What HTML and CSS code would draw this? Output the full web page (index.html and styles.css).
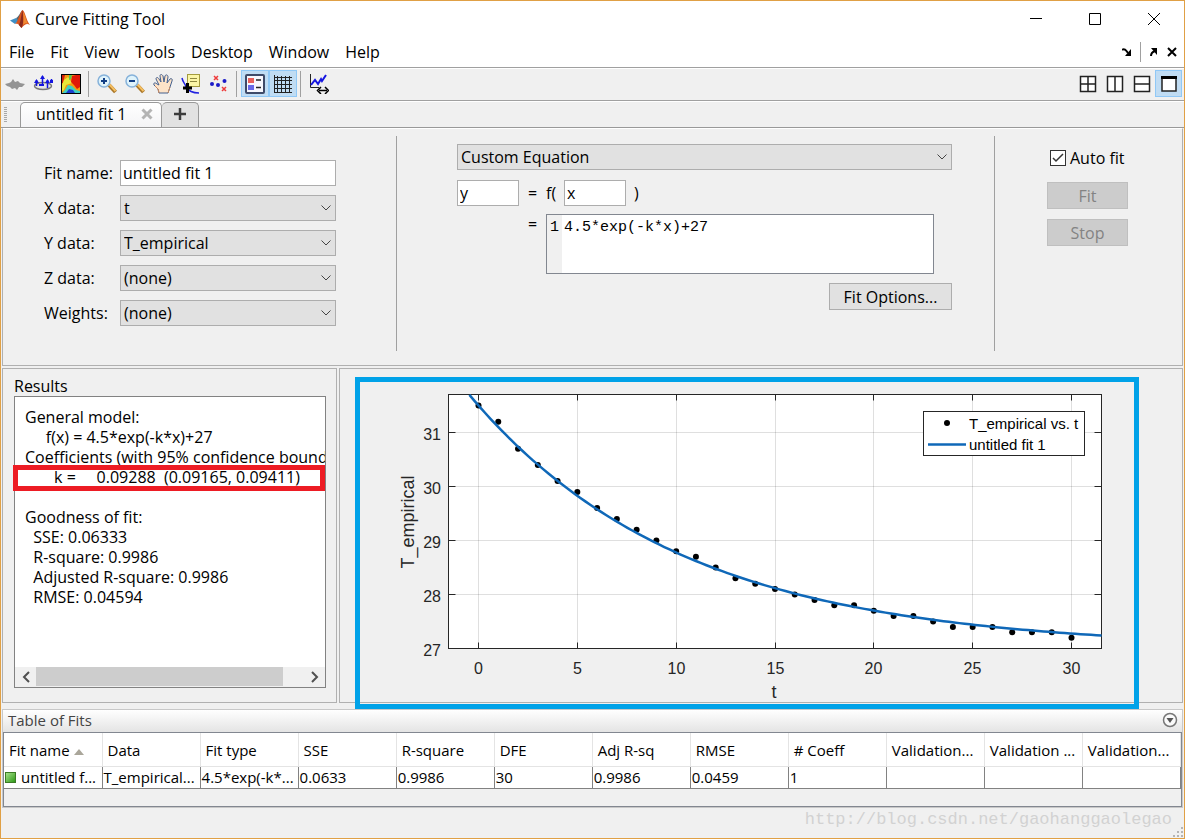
FILE: index.html
```html
<!DOCTYPE html>
<html lang="en">
<head>
  <meta charset="UTF-8">
  <meta name="viewport" content="width=device-width, initial-scale=1.0">
  <title>Curve Fitting Tool</title>
  <link rel="stylesheet" href="styles.css">
</head>
<body>

  <header class="titlebar">
    <svg class="logo" width="20" height="20" viewBox="0 0 20 20">
      <path d="M0 11.500 L6 9 L9 12 L5 15 Z" fill="#3f8fc4"/>
      <path d="M6 9 C9 8 10 3 12.500 1 L11 9 L9 13 Z" fill="#55656f"/>
      <path d="M5 15 C8 13 10 3 12.500 1 C15 2 16 11 20 16 C17 14 15 15 11.500 19 C9 17 9 14 5 15 Z" fill="#d9541e"/>
      <path d="M12.500 1 C11 6 11 12 9 16 L11.500 19 C14 15 13 6 12.500 1 Z" fill="#8c2a1c"/>
      <path d="M13 3 C13.500 8 14 11 13 16 C15 14 16 14 18 15 C16 11 15 5 13 3 Z" fill="#f08b32"/>
    </svg>
    <span class="title">Curve Fitting Tool</span>
    <div class="window-buttons">
      <button aria-label="Minimize"><svg width="14" height="14"><path d="M1 6.500 H13" stroke="#000"/></svg></button>
      <button aria-label="Maximize"><svg width="14" height="14"><path d="M1.500 1.500 H12.500 V12.500 H1.500 Z" fill="none" stroke="#000"/></svg></button>
      <button aria-label="Close"><svg width="14" height="14"><path d="M1 1 L13 13 M13 1 L1 13" stroke="#000"/></svg></button>
    </div>
  </header>

  <nav class="menubar">
    <button>File</button>
    <button>Fit</button>
    <button>View</button>
    <button>Tools</button>
    <button>Desktop</button>
    <button>Window</button>
    <button>Help</button>
    <div class="dock-buttons">
      <button aria-label="Minimize figure"><svg width="10" height="10"><path d="M0 3 C2 1 4 3 6 6" fill="none" stroke="#000" stroke-width="2"/><path d="M9 2 V9 H3 Z"/></svg></button>
      <span class="dock-sep"></span>
      <button aria-label="Undock figure"><svg width="10" height="10"><path d="M2 9 C2 6 3 5 6 4" fill="none" stroke="#000" stroke-width="2"/><path d="M2 1 H8 V8 Z"/></svg></button>
      <button aria-label="Close figure"><svg width="10" height="10"><path d="M1 1 L9 9 M9 1 L1 9" stroke="#000" stroke-width="2"/></svg></button>
    </div>
  </nav>

  <div class="toolbar">
    <button aria-label="Residuals plot">
      <svg width="20" height="20"><path d="M0 10 L4 9 L6 8 L8 5 L10 8 L13 7 L15 9 L20 10 L17 13 L14 13 L12 16 L10 14 L7 15 L5 13 L2 12 Z" fill="#949494"/></svg>
    </button>
    <button aria-label="Surface plot">
      <svg width="20" height="20"><ellipse cx="10" cy="12" rx="8.500" ry="3.500" fill="#e6e6e6" stroke="#777" stroke-width="1.500"/><path d="M9.500 12 V2 M3.500 12 V6 M14.500 14 V6 M18.500 9 V5" stroke="#1414e0" stroke-width="1.500"/><path d="M7 5 L9.500 1 L12 5 Z M1 9 L3.500 5 L6 9 Z M12 9 L14.500 5 L17 9 Z M17 6 h3 v3 h-3 Z M6 10 h5 v2 h-5 Z" fill="#1414e0"/></svg>
    </button>
    <button aria-label="Contour plot">
      <svg width="20" height="20">
        <rect width="20" height="20" fill="#000"/>
        <rect x="1" y="1" width="18" height="18" fill="#f39a10"/>
        <path d="M1 1 H4 L2 9 L1 9 Z" fill="#d51c08"/>
        <path d="M3 6 L7 3 L11 9 L5 11 L3 16 L1 17 V11 Z" fill="#e8e83a"/>
        <path d="M11 2 L15 1 H19 V13 L16 15 L13 11 L10 8 Z" fill="#e01808"/>
        <path d="M8 1 H11 L10 5 L8 6 Z" fill="#58c850"/>
        <path d="M4 16 L7 11 L11 12 L15 16 L19 17 V19 H1 Z" fill="#3fd0c0"/>
        <path d="M5 19 L8 15 L12 16 L14 19 Z" fill="#1b3fd0"/>
      </svg>
    </button>
    <span class="sep"></span>
    <button aria-label="Zoom in">
      <svg width="20" height="20"><path d="M12 11 L18.500 18" stroke="#a87526" stroke-width="4"/><path d="M12 10 L18.500 17" stroke="#f5bf62" stroke-width="2"/><circle cx="7" cy="7" r="6" fill="#dff3fb" stroke="#86b2da" stroke-width="1.500"/><path d="M7 4 V10 M4 7 H10" stroke="#123f86" stroke-width="2"/></svg>
    </button>
    <button aria-label="Zoom out">
      <svg width="20" height="20"><path d="M12 11 L18.500 18" stroke="#a87526" stroke-width="4"/><path d="M12 10 L18.500 17" stroke="#f5bf62" stroke-width="2"/><circle cx="7" cy="7" r="6" fill="#dff3fb" stroke="#86b2da" stroke-width="1.500"/><path d="M4 7 H10" stroke="#123f86" stroke-width="2"/></svg>
    </button>
    <button aria-label="Pan">
      <svg width="20" height="20"><path d="M6 19 L5 15 L1 11 C0 9 2 8 4 10 L6 11 L3 5 C3 3 5 3 6 5 L8 8 L7 2 C7 0 9 0 10 2 L11 8 L12 2 C13 0 15 1 15 3 L14 9 L17 5 C18 4 20 5 19 7 L17 13 L15 19 Z" fill="#fde3c8" stroke="#44608e"/><path d="M6 19 L5 15 L2 12 M15 19 L17 13" stroke="#c98b62" fill="none"/></svg>
    </button>
    <button aria-label="Data cursor">
      <svg width="20" height="20"><path d="M1 4 C2 9 4 9 5 13 C8 18 12 19 18 19" fill="none" stroke="#2222e0" stroke-width="1.500"/><rect x="6.500" y="0.500" width="12" height="12" fill="#fbf6a6" stroke="#a39b3e"/><path d="M9 4.500 H16 M9 7.500 H16" stroke="#8e8840"/><path d="M6.500 9 V19 M2 14 H11" stroke="#000" stroke-width="3"/></svg>
    </button>
    <button aria-label="Exclude outliers">
      <svg width="20" height="20"><g fill="#1a1ac8"><circle cx="3" cy="10" r="2"/><circle cx="9" cy="11" r="2"/><circle cx="15.500" cy="7" r="2"/></g><path d="M5 2 L9 6 M9 2 L5 6 M13 13 L17 17 M17 13 L13 17" stroke="#ee3a3a" stroke-width="1.500"/></svg>
    </button>
    <span class="sep"></span>
    <button class="on" aria-label="Legend">
      <svg width="20" height="20"><rect x="1" y="1" width="18" height="18" rx="1" fill="#f7f7fd" stroke="#3e4a68" stroke-width="2"/><rect x="3" y="4" width="6" height="5" fill="#e8605c"/><rect x="3" y="11" width="6" height="5" fill="#6868e8"/><path d="M11 6 H16 M11 13.500 H16" stroke="#222" stroke-width="1.500"/></svg>
    </button>
    <button class="on" aria-label="Grid">
      <svg width="20" height="20"><path d="M1.500 1 V19 M4.500 2 V19 M8.500 2 V19 M12.500 2 V19 M16.500 2 V19 M1 18.500 H19 M1 14.500 H19 M1 10.500 H19 M1 6.500 H19 M1 3.500 H19" stroke="#222"/></svg>
    </button>
    <span class="sep"></span>
    <button aria-label="Axes limits">
      <svg width="20" height="20"><path d="M1.500 0 V13.500 H10" fill="none" stroke="#222"/><path d="M2 11 L6 6 L9 10 L12 5 L13 7 L17 1" fill="none" stroke="#1414e0" stroke-width="2"/><path d="M10 16.500 H18" stroke="#000" stroke-width="1.500"/><path d="M12 13 L8.500 16.500 L12 20 M16 13 L19.500 16.500 L16 20" fill="none" stroke="#000" stroke-width="1.500"/></svg>
    </button>
    <div class="layout-buttons">
      <button aria-label="Tile all"><svg width="18" height="18"><path d="M1.500 1.500 H16.500 V16.500 H1.500 Z M9 1 V17 M1 9 H17" fill="#fff" stroke="#222" stroke-width="1.500"/></svg></button>
      <button aria-label="Left/right tile"><svg width="18" height="18"><path d="M1.500 1.500 H16.500 V16.500 H1.500 Z M9 1 V17" fill="#fff" stroke="#222" stroke-width="1.500"/></svg></button>
      <button aria-label="Top/bottom tile"><svg width="18" height="18"><path d="M1.500 1.500 H16.500 V16.500 H1.500 Z M1 9 H17" fill="#fff" stroke="#222" stroke-width="1.500"/></svg></button>
      <button class="on" aria-label="Maximize"><svg width="18" height="18"><path d="M2 2 H16 V16 H2 Z" fill="#fff" stroke="#222" stroke-width="1.500"/><path d="M1 2.500 H17" stroke="#000" stroke-width="3"/></svg></button>
    </div>
  </div>

  <div class="tabs">
    <span class="grip"></span>
    <div class="tab">
      <span>untitled fit 1</span>
      <button aria-label="Close tab"><svg width="12" height="12"><path d="M1.500 1.500 L10.500 10.500 M10.500 1.500 L1.500 10.500" stroke="#b4b4b4" stroke-width="3"/></svg></button>
    </div>
    <button class="tab-add" aria-label="New fit"><svg width="14" height="14"><path d="M7 1 V13 M1 7 H13" stroke="#3c3c3c" stroke-width="2.500"/></svg></button>
  </div>

  <main>
    <form class="fit-panel">
      <div class="data-fields">
        <label for="fit-name">Fit name:</label>
        <input type="text" id="fit-name" value="untitled fit 1">
        <label for="x-data">X data:</label>
        <select id="x-data"><option>t</option></select>
        <label for="y-data">Y data:</label>
        <select id="y-data"><option>T_empirical</option></select>
        <label for="z-data">Z data:</label>
        <select id="z-data"><option>(none)</option></select>
        <label for="weights">Weights:</label>
        <select id="weights"><option>(none)</option></select>
      </div>

      <div class="equation">
        <select aria-label="Fit type"><option>Custom Equation</option></select>
        <div class="variables">
          <input type="text" aria-label="Dependent variable" value="y">
          <span class="eq">=</span>
          <span class="fn">f(</span>
          <input type="text" aria-label="Independent variable" value="x">
          <span class="close">)</span>
        </div>
        <div class="expression">
          <span class="eq">=</span>
          <div class="editor">
            <span class="line-no">1</span>
            <textarea aria-label="Equation" spellcheck="false">4.5*exp(-k*x)+27</textarea>
          </div>
        </div>
        <button type="button" class="btn options">Fit Options...</button>
      </div>

      <div class="run">
        <label class="auto"><input type="checkbox" checked>Auto fit</label>
        <button type="button" class="btn" disabled>Fit</button>
        <button type="button" class="btn" disabled>Stop</button>
      </div>
    </form>

    <div class="output">
      <section class="results">
        <h2>Results</h2>
        <div class="results-box">
          <pre class="results-text">General model:
     f(x) = 4.5*exp(-k*x)+27
Coefficients (with 95% confidence bounds):
       k =     0.09288  (0.09165, 0.09411)

Goodness of fit:
  SSE: 0.06333
  R-square: 0.9986
  Adjusted R-square: 0.9986
  RMSE: 0.04594</pre>
          <div class="mark"></div>
          <div class="scrollbar">
            <button aria-label="Scroll left"><svg width="8" height="12"><path d="M7 1 L2 6 L7 11" fill="none" stroke="#505050" stroke-width="2"/></svg></button>
            <div class="track"><div class="thumb"></div></div>
            <button aria-label="Scroll right"><svg width="8" height="12"><path d="M1 1 L6 6 L1 11" fill="none" stroke="#505050" stroke-width="2"/></svg></button>
          </div>
        </div>
      </section>

      <section class="plot">
        <div class="figure">
          <svg id="chart" viewBox="0 0 774 322">
            <rect x="88.500" y="12.500" width="653" height="254" fill="#fff"/>
            <g id="grid"></g>
            <rect x="88.500" y="12.500" width="653" height="254" fill="none" stroke="#262626"/>
            <g id="labels" class="tick-label"></g>
            <g id="points"></g>
            <path id="curve" class="curve"/>
            <text class="axis-label" x="414" y="316" text-anchor="middle">t</text>
            <text class="axis-label" transform="translate(54 140) rotate(-90)" text-anchor="middle">T_empirical</text>
            <rect x="563.500" y="29.500" width="161" height="44" fill="#fff" stroke="#262626"/>
            <circle cx="587" cy="41" r="3"/>
            <path class="curve" d="M568 62.500 H606"/>
            <text class="legend-label" x="609" y="47">T_empirical vs. t</text>
            <text class="legend-label" x="609" y="68">untitled fit 1</text>
          </svg>
        </div>
      </section>
    </div>

    <section class="fits">
      <div class="fits-head">
        <h2>Table of Fits</h2>
        <button aria-label="Table actions"><svg width="16" height="16"><circle cx="8" cy="8" r="6.500" fill="#fafafa" stroke="#777" stroke-width="1.500"/><path d="M4.500 6 H11.500 L8 11 Z" fill="#555"/></svg></button>
      </div>
      <div class="fits-body">
        <table>
          <thead>
            <tr>
              <th>Fit name <svg width="10" height="6"><path d="M0 6 L5 0 L10 6 Z" fill="#aaa69a"/></svg></th>
              <th>Data</th>
              <th>Fit type</th>
              <th>SSE</th>
              <th>R-square</th>
              <th>DFE</th>
              <th>Adj R-sq</th>
              <th>RMSE</th>
              <th># Coeff</th>
              <th>Validation...</th>
              <th>Validation ...</th>
              <th>Validation...</th>
            </tr>
          </thead>
          <tbody>
            <tr>
              <td><span class="swatch"></span>untitled f...</td>
              <td>T_empirical...</td>
              <td>4.5*exp(-k*...</td>
              <td>0.0633</td>
              <td>0.9986</td>
              <td>30</td>
              <td>0.9986</td>
              <td>0.0459</td>
              <td>1</td>
              <td></td>
              <td></td>
              <td></td>
            </tr>
          </tbody>
        </table>
      </div>
    </section>
  </main>

  <footer>
    <span>http://blog.csdn.net/gaohanggaolegao</span>
    <svg width="12" height="12"><path d="M9 1 h2 v2 h-2 Z M5 5 h2 v2 h-2 Z M9 5 h2 v2 h-2 Z M1 9 h2 v2 h-2 Z M5 9 h2 v2 h-2 Z M9 9 h2 v2 h-2 Z" fill="#b4b4b4"/></svg>
  </footer>

  <script>
    const temps = [
      31.5, 31.2, 30.7, 30.4, 30.1, 29.9, 29.6, 29.4, 29.2, 29.0, 28.8,
      28.7, 28.5, 28.3, 28.2, 28.1, 28.0, 27.9, 27.8, 27.8, 27.7,
      27.6, 27.6, 27.5, 27.4, 27.4, 27.4, 27.3, 27.3, 27.3, 27.2
    ];
    const k = 0.09288;
    const left = 88.5, right = 741.5, top_ = 12.5, bottom = 266.5;
    const px = t => 118.5 + t * 593 / 30;
    const py = T => bottom - (T - 27) * 54;

    let grid = "", labels = "";
    for (let t = 0; t <= 30; t += 5) {
      const x = Math.floor(px(t)) + 0.5;
      grid += `<path class="grid" d="M${x} ${top_} V${bottom}"/>`;
      grid += `<path class="tick" d="M${x} ${top_} v6 M${x} ${bottom} v-6"/>`;
      labels += `<text x="${x}" y="292" text-anchor="middle">${t}</text>`;
    }
    for (let T = 27; T <= 31; T++) {
      const y = py(T);
      if (T > 27) {
        grid += `<path class="grid" d="M${left} ${y} H${right}"/>`;
        grid += `<path class="tick" d="M${left} ${y} h7 M${right} ${y} h-7"/>`;
      }
      labels += `<text x="81" y="${y + 7}" text-anchor="end">${T}</text>`;
    }
    document.getElementById("grid").innerHTML = grid;
    document.getElementById("labels").innerHTML = labels;

    document.getElementById("points").innerHTML = temps
      .map((T, t) => `<circle cx="${px(t)}" cy="${py(T)}" r="3"/>`)
      .join("");

    // fitted curve: 4.5*exp(-k*x)+27
    const path = [];
    const start = -0.46, end = 31.52, steps = 120;
    for (let i = 0; i <= steps; i++) {
      const t = start + (end - start) * i / steps;
      path.push(`${px(t).toFixed(2)} ${py(4.5 * Math.exp(-k * t) + 27).toFixed(2)}`);
    }
    document.getElementById("curve").setAttribute("d", "M" + path.join(" L"));
  </script>

</body>
</html>
```
FILE: styles.css
```css
* {
  box-sizing: border-box;
}
body {
  margin: 0;
  min-height: 100vh;
  display: flex;
  flex-direction: column;
  border: 1px solid #e0a045;
  background: #f0f0f0;
  color: #000;
  font-family: "Open Sans", "Noto Sans", sans-serif;
  font-size: 16px;
  line-height: 20px;
}
button, input, select, textarea {
  font: inherit;
  color: inherit;
  margin: 0;
}
button {
  border: 0;
  padding: 0;
  background: none;
}
svg {
  display: block;
}
h2 {
  margin: 0;
  font-size: 16px;
  font-weight: normal;
}

/* title and menus */
.titlebar {
  display: flex;
  align-items: center;
  height: 36px;
  padding-left: 9px;
  background: #fff;
}
.title {
  margin-left: 5px;
}
.window-buttons {
  display: flex;
  margin-left: auto;
  padding-right: 1px;
}
.window-buttons button {
  display: flex;
  justify-content: center;
  width: 59px;
}
.menubar {
  display: flex;
  align-items: center;
  gap: 16px;
  height: 31px;
  padding: 0 7px 0 8px;
  background: #fff;
  border-bottom: 1px solid #a0a0a0;
}
.dock-buttons {
  display: flex;
  align-items: center;
  gap: 8px;
  margin-left: auto;
}
.dock-sep {
  width: 1px;
  height: 20px;
  background: #a0a0a0;
}

/* toolbar */
.toolbar {
  display: flex;
  align-items: center;
  height: 33px;
  padding-bottom: 2px;
  border-top: 1px solid #fff;
  border-bottom: 1px solid #a0a0a0;
}
.toolbar button {
  display: flex;
  align-items: center;
  justify-content: center;
  width: 28px;
  height: 27px;
}
.toolbar .on {
  background: #c0dcf3;
  border: 1px solid #90c8f6;
}
.sep {
  width: 1px;
  height: 26px;
  margin: 0 4px 0 3px;
  background: #a0a0a0;
}
.layout-buttons {
  display: flex;
  margin-left: auto;
  padding-right: 2px;
}
.layout-buttons button {
  width: 27px;
}

/* tabs */
.tabs {
  display: flex;
  align-items: flex-end;
  height: 27px;
  border-top: 1px solid #fff;
  border-bottom: 1px solid #999;
}
.grip {
  align-self: center;
  width: 3px;
  height: 15px;
  margin: 0 13px 0 3px;
  background: repeating-linear-gradient(#a8a8a8 0 1px, #f0f0f0 1px 2px);
}
.tab, .tab-add {
  display: flex;
  align-items: center;
  height: 25px;
  padding-bottom: 2px;
  border: 1px solid #999;
  border-bottom: 0;
  border-radius: 5px 5px 0 0;
}
.tab {
  justify-content: space-between;
  width: 142px;
  padding: 0 8px 2px 15px;
  background: linear-gradient(#fff, #f4f4f6);
}
.tab-add {
  justify-content: center;
  width: 37px;
  background: #e2e2e2;
  border-left: 0;
}

/* fit settings */
main {
  margin: 0 1px;
}
.fit-panel {
  display: flex;
  height: 238px;
  padding: 7px 0 14px;
  border: 1px solid #b0b0b0;
  border-top: 1px solid #fff;
}
input[type="text"], select {
  width: 100%;
  height: 26px;
  padding: 0 2px;
  border: 1px solid #adadad;
  border-radius: 0;
  background: #fff;
}
select {
  padding: 0 3px;
  appearance: none;
  background: #e1e1e1 url("data:image/svg+xml,%3Csvg xmlns='http://www.w3.org/2000/svg' width='10' height='6'%3E%3Cpath d='M0.5 0.500 L5 5 L9.500 0.500' fill='none' stroke='%23444'/%3E%3C/svg%3E") no-repeat right 4px center;
}
.data-fields {
  display: grid;
  grid-template-columns: 76px 216px;
  grid-auto-rows: 26px;
  align-items: center;
  align-content: start;
  row-gap: 9px;
  width: 394px;
  padding: 24px 0 0 41px;
  border-right: 1px solid #a0a0a0;
}
.equation {
  flex: 1;
  display: flex;
  flex-direction: column;
  padding: 8px 42px 0 60px;
  border-right: 1px solid #a0a0a0;
}
.variables {
  display: flex;
  align-items: center;
  margin-top: 10px;
}
.variables input[type="text"] {
  width: 62px;
}
.eq {
  width: 27px;
  text-align: center;
}
.fn {
  width: 18px;
}
.close {
  margin-left: 8px;
}
.expression {
  display: flex;
  margin: 8px 18px 9px 62px;
}
.editor {
  flex: 1;
  display: flex;
  height: 60px;
  border: 1px solid #828790;
  background: #fff;
  font-family: "Liberation Mono", monospace;
  font-size: 15px;
}
.line-no {
  width: 15px;
  padding: 3px 3px 0;
  background: #f0f0f0;
}
.editor textarea {
  flex: 1;
  padding: 3px 2px 0;
  border: 0;
  resize: none;
  background: none;
}
.btn {
  height: 27px;
  border: 1px solid #adadad;
  background: #e1e1e1;
}
.options {
  align-self: flex-end;
  width: 123px;
}
.run {
  display: flex;
  flex-direction: column;
  align-items: flex-start;
  gap: 10px;
  width: 187px;
  padding: 12px 0 0 52px;
}
.run .btn {
  width: 81px;
}
.btn:disabled {
  color: #838383;
  background: #ccc;
  border-color: #bfbfbf;
}
.auto {
  display: flex;
  align-items: center;
  gap: 4px;
  margin-bottom: 4px;
  padding-left: 3px;
}
.auto input {
  appearance: none;
  width: 16px;
  height: 16px;
  border: 1px solid #333;
  background: #fff url("data:image/svg+xml,%3Csvg xmlns='http://www.w3.org/2000/svg' width='12' height='10'%3E%3Cpath d='M1 5 L4 8 L11 1' fill='none' stroke='%23333' stroke-width='1.500'/%3E%3C/svg%3E") no-repeat center;
}

/* results and plot */
.output {
  display: flex;
  gap: 2px;
  margin-top: 2px;
}
.results, .plot {
  border: 1px solid #b0b0b0;
}
.results {
  display: flex;
  flex-direction: column;
  width: 335px;
  padding: 7px 10px 14px 11px;
}
.results-box {
  position: relative;
  flex: 1;
  display: flex;
  flex-direction: column;
  border: 1px solid #828282;
  background: #fff;
}
.results-text {
  flex: 1;
  margin: 0;
  padding: 10px 0 0 10px;
  overflow: hidden;
  font-family: inherit;
}
.mark {
  position: absolute;
  top: 68px;
  left: -2px;
  right: 0;
  height: 26px;
  border: 5px solid #ed1c24;
}
.scrollbar {
  display: flex;
  height: 20px;
  background: #f0f0f0;
}
.scrollbar button {
  display: flex;
  align-items: center;
  justify-content: center;
  width: 21px;
}
.track {
  flex: 1;
}
.thumb {
  width: 92%;
  height: 19px;
  background: #cdcdcd;
}
.plot {
  flex: 1;
}
.figure {
  position: relative;
  margin: 8px 43px -7px 15px;
  border: 5px solid #00a2e8;
}
#chart {
  width: 100%;
  height: auto;
  font-family: "Liberation Sans", Arial, sans-serif;
}
.grid {
  stroke: #262626;
  stroke-opacity: 0.15;
}
.tick {
  stroke: #262626;
}
.curve {
  fill: none;
  stroke: #0f68b8;
  stroke-width: 2.5px;
}
.tick-label, .axis-label {
  fill: #262626;
}
.tick-label {
  font-size: 16px;
}
.axis-label {
  font-size: 18px;
}
.legend-label {
  font-size: 15px;
}

/* table of fits */
.fits {
  margin-top: 6px;
  border: 1px solid #c8c8c8;
}
.fits-head {
  display: flex;
  align-items: center;
  justify-content: space-between;
  height: 22px;
  padding: 0 4px 2px 5px;
  background: linear-gradient(#fff, #e4e4e4);
  color: #444;
}
.fits-head h2 {
  font-size: 15px;
}
.fits-body {
  height: 75px;
  border: 1px solid #828790;
}
table {
  width: 100%;
  table-layout: fixed;
  border-collapse: collapse;
  background: #fff;
  font-size: 15px;
}
th, td {
  overflow: hidden;
  white-space: nowrap;
  text-align: left;
  font-weight: normal;
}
th {
  height: 33px;
  padding: 2px 3px 0 5px;
  border-right: 1px solid #e4e4e4;
  border-bottom: 1px solid #e4e4e4;
}
th svg {
  display: inline-block;
  vertical-align: middle;
}
td {
  height: 22px;
  padding: 0 1px 1px;
  border-right: 1px solid #828282;
  border-bottom: 1px solid #828282;
}
.swatch {
  display: inline-block;
  width: 11px;
  height: 11px;
  margin-right: 5px;
  border: 1px solid #3b7a25;
  background: linear-gradient(135deg, #a6e08a, #2f9a18);
}
footer {
  display: flex;
  align-items: flex-end;
  justify-content: flex-end;
  flex: 1;
  color: #d2d2d2;
  font-family: "Liberation Mono", monospace;
  font-size: 17px;
}
footer span {
  align-self: flex-start;
  padding-top: 2px;
}
```
